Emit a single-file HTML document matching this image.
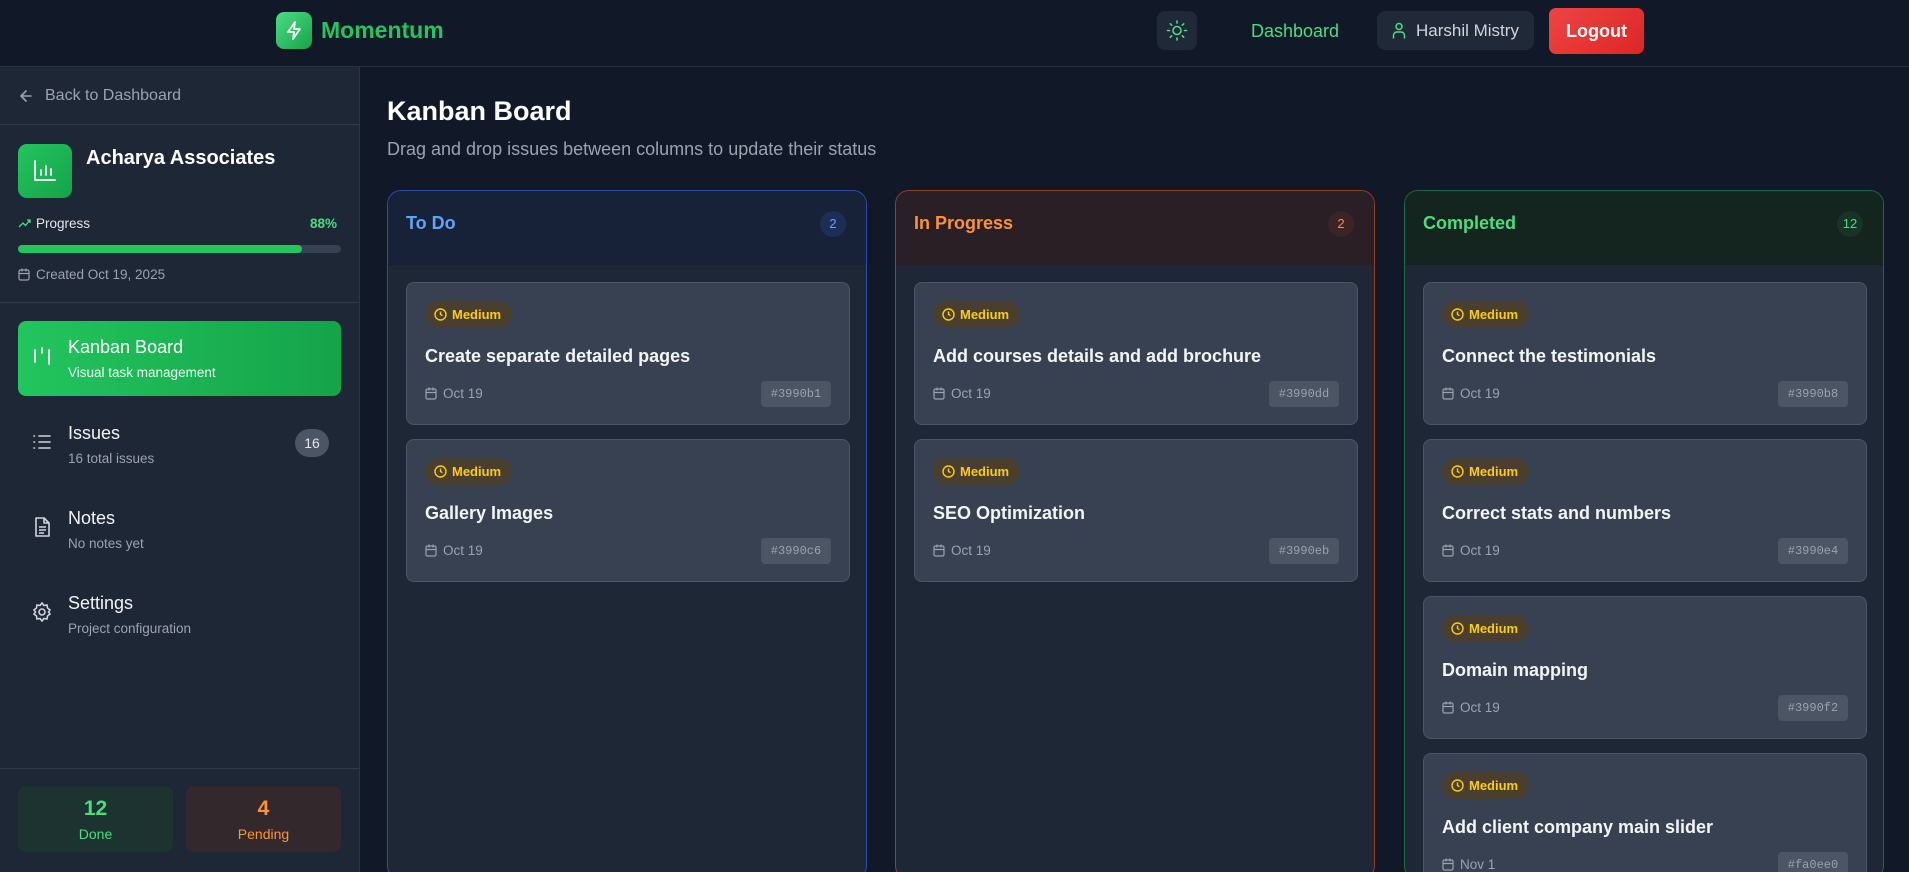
<!DOCTYPE html>
<html><head><meta charset="utf-8"><style>
*{box-sizing:border-box;margin:0;padding:0}
html,body{width:1909px;height:872px;overflow:hidden}
body{background:#111827;font-family:"Liberation Sans",sans-serif;position:relative;color:#fff}
.abs{position:absolute}
header{position:absolute;left:0;top:0;width:1909px;height:67px;background:#111827;border-bottom:1px solid #263040}
.side{position:absolute;left:0;top:67px;width:360px;height:805px;background:#1e2736;border-right:1px solid #2b3545}
.hr{position:absolute;left:0;width:359px;height:1px;background:#2f3a4a}
.nav{position:absolute;left:18px;width:323px;height:75px;border-radius:8px}
.nav .t{position:absolute;left:50px;top:17px;font-size:18px;color:#f3f4f6}
.nav .s{position:absolute;left:50px;top:45px;font-size:13.5px;color:#9ca3af}
.nav svg{position:absolute;left:14px;top:26px}
.col{position:absolute;top:190px;width:480px;height:690px;border-radius:14px;background:#1e2736;overflow:hidden}
.ch{height:74px;position:relative}
.ch .t{position:absolute;left:18px;top:22px;font-size:18px;font-weight:bold}
.ch .c{position:absolute;right:20px;top:20px;width:26px;height:26px;border-radius:13px;font-size:13px;text-align:center;line-height:26px}
.card{position:absolute;left:18px;width:444px;height:143px;background:#374151;border:1px solid #4b5563;border-radius:8px}
.badge{position:absolute;left:18px;top:18px;height:27px;width:87px;border-radius:14px;background:#4a3f2f;color:#facc15;font-size:13px;font-weight:bold;line-height:27px;padding-left:27px}
.badge svg{position:absolute;left:9px;top:7px}
.card .ti{position:absolute;left:18px;top:63px;font-size:18px;font-weight:bold;color:#f3f4f6}
.card .d{position:absolute;left:18px;top:103px;font-size:13.5px;color:#9ca3af;padding-left:18px}
.card .d svg{position:absolute;left:0;top:1px}
.card .h{position:absolute;right:18px;top:98px;height:26px;width:70px;border-radius:4px;background:#4b5563;color:#9ca3af;font-family:"Liberation Mono",monospace;font-size:12px;text-align:center;line-height:26px}
</style></head><body>
<header>
 <div class="abs" style="left:276px;top:12px;width:36px;height:37px;border-radius:8px;background:linear-gradient(135deg,#4ade80,#16a34a)">
  <svg width="36" height="37" viewBox="0 0 36 37"><path d="M19 10l-7 10h6l-1 7 7-10h-6z" fill="none" stroke="#fff" stroke-width="1.8" stroke-linejoin="round"/></svg></div>
 <div class="abs" style="left:321px;top:17px;font-size:23px;font-weight:bold;color:#22c55e">Momentum</div>
 <div class="abs" style="left:1157px;top:11px;width:40px;height:39px;border-radius:8px;background:#1f2937">
  <svg width="40" height="39" viewBox="0 0 40 39" fill="none" stroke="#4ade80" stroke-width="1.6" stroke-linecap="round"><circle cx="20" cy="19.5" r="4"/><path d="M20 10v2M20 27v2M10.5 19.5h2M27.5 19.5h2M13.3 12.8l1.4 1.4M25.3 24.8l1.4 1.4M13.3 26.2l1.4-1.4M25.3 14.2l1.4-1.4"/></svg></div>
 <div class="abs" style="left:1251px;top:21px;font-size:18px;color:#4ade80">Dashboard</div>
 <div class="abs" style="left:1377px;top:11px;width:157px;height:39px;border-radius:8px;background:#1f2937">
  <svg class="abs" style="left:15px;top:11px" width="14" height="17" viewBox="0 0 14 17" fill="none" stroke="#4ade80" stroke-width="1.5"><circle cx="7" cy="4.5" r="3"/><path d="M1.5 16.5v-3a3.5 3.5 0 0 1 3.5-3.5h4a3.5 3.5 0 0 1 3.5 3.5v3"/></svg>
  <div class="abs" style="left:39px;top:10px;font-size:17px;color:#d1d5db">Harshil Mistry</div></div>
 <div class="abs" style="left:1549px;top:8px;width:95px;height:46px;border-radius:7px;background:linear-gradient(135deg,#ef4444,#dc2626);font-size:18px;font-weight:bold;text-align:center;line-height:46px">Logout</div>
</header>
<div class="side">
 <svg class="abs" style="left:18px;top:21px" width="16" height="16" viewBox="0 0 16 16" fill="none" stroke="#9ca3af" stroke-width="1.6" stroke-linecap="round" stroke-linejoin="round"><path d="M13 8H3M8 3L3 8l5 5"/></svg>
 <div class="abs" style="left:45px;top:20px;font-size:16px;color:#9ca3af">Back to Dashboard</div>
 <div class="hr" style="top:57px"></div>
 <div class="abs" style="left:18px;top:77px;width:54px;height:54px;border-radius:9px;background:linear-gradient(135deg,#22c55e,#16a34a)">
  <svg width="54" height="54" viewBox="0 0 54 54" fill="none" stroke="#fff" stroke-width="1.8" stroke-linecap="round"><path d="M17 17v19h20M23 31v-5M28 31v-9M33 31v-6"/></svg></div>
 <div class="abs" style="left:86px;top:80px;font-size:20px;font-weight:bold">Acharya Associates</div>
 <svg class="abs" style="left:18px;top:151px" width="13" height="10" viewBox="0 0 13 10" fill="none" stroke="#4ade80" stroke-width="1.3"><path d="M1 9l4-4 2.5 2.5L12 2M9 2h3v3"/></svg>
 <div class="abs" style="left:36px;top:149px;font-size:13.5px;color:#e5e7eb">Progress</div>
 <div class="abs" style="left:310px;top:149px;font-size:13.5px;font-weight:bold;color:#4ade80">88%</div>
 <div class="abs" style="left:18px;top:178px;width:323px;height:8px;border-radius:4px;background:#374151"><div style="width:88%;height:8px;border-radius:4px;background:#22c55e"></div></div>
 <svg class="abs" style="left:18px;top:201px" width="12" height="13" viewBox="0 0 12 13" fill="none" stroke="#9ca3af" stroke-width="1.2"><rect x="1" y="2" width="10" height="10" rx="1.5"/><path d="M1 5.5h10M4 0.5v3M8 0.5v3"/></svg>
 <div class="abs" style="left:36px;top:200px;font-size:13.5px;color:#9ca3af">Created Oct 19, 2025</div>
 <div class="hr" style="top:235px"></div>
 <div class="nav" style="top:254px;background:linear-gradient(90deg,#22c55e,#16a34a)">
  <svg width="20" height="20" viewBox="0 0 20 20" fill="none" stroke="#fff" stroke-width="1.8" stroke-linecap="round"><path d="M3 3v12M10 1v5M17 3v14"/></svg>
  <div class="t" style="top:16px;color:#fff">Kanban Board</div><div class="s" style="top:44px;color:#ecfdf5">Visual task management</div></div>
 <div class="nav" style="top:339px">
  <svg width="20" height="20" viewBox="0 0 20 20" fill="none" stroke="#d1d5db" stroke-width="1.6" stroke-linecap="round"><path d="M7 4h11M7 10h11M7 16h11M2 4h.5M2 10h.5M2 16h.5"/></svg>
  <div class="t">Issues</div><div class="s">16 total issues</div>
  <div class="abs" style="left:277px;top:23px;width:34px;height:28px;border-radius:14px;background:#4b5563;font-size:14px;color:#e5e7eb;text-align:center;line-height:28px">16</div></div>
 <div class="nav" style="top:424px">
  <svg width="20" height="20" viewBox="0 0 20 20" fill="none" stroke="#d1d5db" stroke-width="1.6" stroke-linejoin="round"><path d="M4 1h8l5 5v13H4zM12 1v5h5M7 10h7M7 13h7M7 16h5"/></svg>
  <div class="t">Notes</div><div class="s">No notes yet</div></div>
 <div class="nav" style="top:509px">
  <svg width="20" height="20" viewBox="0 0 20 20" fill="none" stroke="#d1d5db" stroke-width="1.6"><circle cx="10" cy="10" r="3"/><path d="M10 1l2 2.5 3-.5 .5 3L18 8l-1.5 2L18 12l-2.5 2-.5 3-3-.5L10 19l-2-2.5-3 .5-.5-3L2 12l1.5-2L2 8l2.5-2 .5-3 3 .5z"/></svg>
  <div class="t">Settings</div><div class="s">Project configuration</div></div>
 <div class="hr" style="top:701px"></div>
 <div class="abs" style="left:18px;top:719px;width:155px;height:66px;border-radius:8px;background:#1d3330;text-align:center">
  <div style="margin-top:11px;font-size:21px;font-weight:bold;color:#4ade80">12</div><div style="margin-top:5px;font-size:14px;color:#4ade80">Done</div></div>
 <div class="abs" style="left:186px;top:719px;width:155px;height:66px;border-radius:8px;background:#33292c;text-align:center">
  <div style="margin-top:11px;font-size:21px;font-weight:bold;color:#fb923c">4</div><div style="margin-top:5px;font-size:14px;color:#fb923c">Pending</div></div>
</div>
<div class="abs" style="left:387px;top:96px;font-size:27px;font-weight:bold">Kanban Board</div>
<div class="abs" style="left:387px;top:139px;font-size:18px;color:#9ca3af">Drag and drop issues between columns to update their status</div>

<div class="col" style="left:387px;border:1px solid #2c4bb0">
 <div class="ch" style="background:#172138"><div class="t" style="color:#60a5fa">To Do</div><div class="c" style="background:#1e2d55;color:#60a5fa">2</div></div>
 <div class="card" style="top:91px"><div class="badge"><svg width="13" height="13" viewBox="0 0 13 13" fill="none" stroke="#facc15" stroke-width="1.4"><circle cx="6.5" cy="6.5" r="5.5"/><path d="M6.5 3.5v3l2 1.2"/></svg>Medium</div><div class="ti">Create separate detailed pages</div><div class="d"><svg width="12" height="13" viewBox="0 0 12 13" fill="none" stroke="#9ca3af" stroke-width="1.2"><rect x="1" y="2" width="10" height="10" rx="1.5"/><path d="M1 5.5h10M4 .5v3M8 .5v3"/></svg>Oct 19</div><div class="h">#3990b1</div></div>
 <div class="card" style="top:248px"><div class="badge"><svg width="13" height="13" viewBox="0 0 13 13" fill="none" stroke="#facc15" stroke-width="1.4"><circle cx="6.5" cy="6.5" r="5.5"/><path d="M6.5 3.5v3l2 1.2"/></svg>Medium</div><div class="ti">Gallery Images</div><div class="d"><svg width="12" height="13" viewBox="0 0 12 13" fill="none" stroke="#9ca3af" stroke-width="1.2"><rect x="1" y="2" width="10" height="10" rx="1.5"/><path d="M1 5.5h10M4 .5v3M8 .5v3"/></svg>Oct 19</div><div class="h">#3990c6</div></div>
</div>

<div class="col" style="left:895px;border:1px solid #9a3d1e">
 <div class="ch" style="background:#2a1f25"><div class="t" style="color:#fb923c">In Progress</div><div class="c" style="background:#3a2424;color:#fb923c">2</div></div>
 <div class="card" style="top:91px"><div class="badge"><svg width="13" height="13" viewBox="0 0 13 13" fill="none" stroke="#facc15" stroke-width="1.4"><circle cx="6.5" cy="6.5" r="5.5"/><path d="M6.5 3.5v3l2 1.2"/></svg>Medium</div><div class="ti">Add courses details and add brochure</div><div class="d"><svg width="12" height="13" viewBox="0 0 12 13" fill="none" stroke="#9ca3af" stroke-width="1.2"><rect x="1" y="2" width="10" height="10" rx="1.5"/><path d="M1 5.5h10M4 .5v3M8 .5v3"/></svg>Oct 19</div><div class="h">#3990dd</div></div>
 <div class="card" style="top:248px"><div class="badge"><svg width="13" height="13" viewBox="0 0 13 13" fill="none" stroke="#facc15" stroke-width="1.4"><circle cx="6.5" cy="6.5" r="5.5"/><path d="M6.5 3.5v3l2 1.2"/></svg>Medium</div><div class="ti">SEO Optimization</div><div class="d"><svg width="12" height="13" viewBox="0 0 12 13" fill="none" stroke="#9ca3af" stroke-width="1.2"><rect x="1" y="2" width="10" height="10" rx="1.5"/><path d="M1 5.5h10M4 .5v3M8 .5v3"/></svg>Oct 19</div><div class="h">#3990eb</div></div>
</div>

<div class="col" style="left:1404px;border:1px solid #1b6b3d">
 <div class="ch" style="background:#14241f"><div class="t" style="color:#4ade80">Completed</div><div class="c" style="background:#173426;color:#4ade80">12</div></div>
 <div class="card" style="top:91px"><div class="badge"><svg width="13" height="13" viewBox="0 0 13 13" fill="none" stroke="#facc15" stroke-width="1.4"><circle cx="6.5" cy="6.5" r="5.5"/><path d="M6.5 3.5v3l2 1.2"/></svg>Medium</div><div class="ti">Connect the testimonials</div><div class="d"><svg width="12" height="13" viewBox="0 0 12 13" fill="none" stroke="#9ca3af" stroke-width="1.2"><rect x="1" y="2" width="10" height="10" rx="1.5"/><path d="M1 5.5h10M4 .5v3M8 .5v3"/></svg>Oct 19</div><div class="h">#3990b8</div></div>
 <div class="card" style="top:248px"><div class="badge"><svg width="13" height="13" viewBox="0 0 13 13" fill="none" stroke="#facc15" stroke-width="1.4"><circle cx="6.5" cy="6.5" r="5.5"/><path d="M6.5 3.5v3l2 1.2"/></svg>Medium</div><div class="ti">Correct stats and numbers</div><div class="d"><svg width="12" height="13" viewBox="0 0 12 13" fill="none" stroke="#9ca3af" stroke-width="1.2"><rect x="1" y="2" width="10" height="10" rx="1.5"/><path d="M1 5.5h10M4 .5v3M8 .5v3"/></svg>Oct 19</div><div class="h">#3990e4</div></div>
 <div class="card" style="top:405px"><div class="badge"><svg width="13" height="13" viewBox="0 0 13 13" fill="none" stroke="#facc15" stroke-width="1.4"><circle cx="6.5" cy="6.5" r="5.5"/><path d="M6.5 3.5v3l2 1.2"/></svg>Medium</div><div class="ti">Domain mapping</div><div class="d"><svg width="12" height="13" viewBox="0 0 12 13" fill="none" stroke="#9ca3af" stroke-width="1.2"><rect x="1" y="2" width="10" height="10" rx="1.5"/><path d="M1 5.5h10M4 .5v3M8 .5v3"/></svg>Oct 19</div><div class="h">#3990f2</div></div>
 <div class="card" style="top:562px"><div class="badge"><svg width="13" height="13" viewBox="0 0 13 13" fill="none" stroke="#facc15" stroke-width="1.4"><circle cx="6.5" cy="6.5" r="5.5"/><path d="M6.5 3.5v3l2 1.2"/></svg>Medium</div><div class="ti">Add client company main slider</div><div class="d"><svg width="12" height="13" viewBox="0 0 12 13" fill="none" stroke="#9ca3af" stroke-width="1.2"><rect x="1" y="2" width="10" height="10" rx="1.5"/><path d="M1 5.5h10M4 .5v3M8 .5v3"/></svg>Nov 1</div><div class="h">#fa0ee0</div></div>
</div>
</body></html>
